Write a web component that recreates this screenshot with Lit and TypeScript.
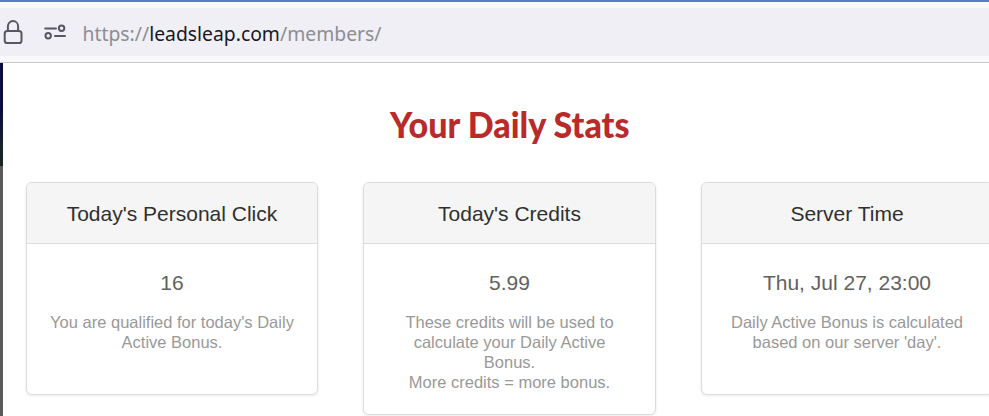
import { LitElement, html, css, svg } from "lit";
import { customElement, property } from "lit/decorators.js";

@customElement("stat-card")
class StatCard extends LitElement {
  @property() heading = "";
  @property() value = "";
  @property({ attribute: false }) lines: string[] = [];

  static styles = css`
    :host {
      display: block;
      box-sizing: border-box;
      border: 1px solid #dcdcdc;
      border-radius: 6px;
      background: #fff;
      box-shadow: 0 1px 3px rgba(0, 0, 0, 0.09);
      overflow: hidden;
      text-align: center;
    }
    .head {
      box-sizing: border-box;
      height: 61px;
      padding-top: 19px;
      line-height: 24px;
      border-bottom: 1px solid #dcdcdc;
      background: #f5f5f5;
      color: #303030;
      font-size: 21px;
    }
    .body {
      padding: 27px 20px 22px;
    }
    .value {
      line-height: 24px;
      font-size: 21px;
      color: #626262;
    }
    .note {
      margin-top: 17px;
      font-size: 16.5px;
      line-height: 20px;
      color: #999;
      white-space: nowrap;
    }
  `;

  render() {
    return html`
      <div class="head">${this.heading}</div>
      <div class="body">
        <div class="value">${this.value}</div>
        <div class="note">${this.lines.map((l) => html`<div>${l}</div>`)}</div>
      </div>
    `;
  }
}

const cards = [
  { heading: "Today's Personal Click", value: "16", lines: ["You are qualified for today's Daily", "Active Bonus."] },
  {
    heading: "Today's Credits",
    value: "5.99",
    lines: ["These credits will be used to", "calculate your Daily Active", "Bonus.", "More credits = more bonus."],
  },
  { heading: "Server Time", value: "Thu, Jul 27, 23:00", lines: ["Daily Active Bonus is calculated", "based on our server 'day'."] },
];

const lockIcon = svg`
  <rect x="1.7" y="11" width="16.8" height="12" rx="2.6"></rect>
  <path d="M4.9 11V6.2a5.1 5.1 0 0 1 10.2 0V11"></path>`;

const permissionsIcon = svg`
  <path d="M1.2 4.5h10.8M11 12h10"></path>
  <circle cx="17.6" cy="4.3" r="2.7"></circle>
  <circle cx="4.2" cy="11.8" r="2.7"></circle>`;

@customElement("app-root")
class AppRoot extends LitElement {
  static styles = css`
    :host {
      display: flex;
      flex-direction: column;
      width: 989px;
      height: 416px;
      overflow: hidden;
      background: #fff;
      font-family: "Liberation Sans", Arial, sans-serif;
    }
    .toolbar {
      box-sizing: border-box;
      height: 63px;
      flex: none;
      padding: 6px 0;
      border-top: 2px solid #5b7cc8;
      border-bottom: 1px solid #c6c6cb;
      background: #f9f9fc;
    }
    .address {
      display: flex;
      align-items: flex-start;
      height: 48px;
      background: #f0eff5;
    }
    svg {
      display: block;
      overflow: visible;
    }
    .icon {
      fill: none;
      stroke: #58575f;
      stroke-width: 2;
      stroke-linecap: round;
    }
    .lock {
      margin: 12px 0 0 3px;
    }
    .perms {
      margin: 16px 0 0 20px;
    }
    .url {
      margin: 8px 0 0 16px;
      font: 20.5px "Noto Sans", "Open Sans", sans-serif;
      fill: #8d8d92;
    }
    .domain {
      fill: #18181f;
    }
    .page {
      flex: 1;
      display: flex;
      min-height: 0;
    }
    .rail {
      width: 3px;
      flex: none;
      display: flex;
      flex-direction: column;
      background: #5a5a5a;
    }
    .rail-top {
      height: 103px;
      background: linear-gradient(#0b0d3c 0 45%, #18222a 80%, #1b2422);
    }
    .content {
      flex: none;
      padding-left: 23px;
    }
    .title {
      margin: 40px 0 0 363px;
      height: 79px;
      font: 900 36px Lato, "Open Sans", sans-serif;
      fill: #b92a2a;
    }
    .cards {
      display: grid;
      grid-template-columns: 292px 293px 292px;
      column-gap: 45px;
      align-items: start;
    }
    .cards stat-card {
      min-height: 213px;
    }
  `;

  render() {
    return html`
      <div class="toolbar">
        <div class="address">
          <svg class="icon lock" width="21" height="25">${lockIcon}</svg>
          <svg class="icon perms" width="22" height="17">${permissionsIcon}</svg>
          <svg class="url" width="300" height="34">
            <text x="0.5" y="25" textLength="299" lengthAdjust="spacingAndGlyphs">https://<tspan class="domain">leadsleap.com</tspan>/members/</text>
          </svg>
        </div>
      </div>
      <div class="page">
        <div class="rail"><div class="rail-top"></div></div>
        <div class="content">
          <svg class="title" width="242" height="50">
            <text x="1" y="35" textLength="239.5" lengthAdjust="spacingAndGlyphs">Your Daily Stats</text>
          </svg>
          <div class="cards">
            ${cards.map((c) => html`<stat-card .heading=${c.heading} .value=${c.value} .lines=${c.lines}></stat-card>`)}
          </div>
        </div>
      </div>
    `;
  }
}
